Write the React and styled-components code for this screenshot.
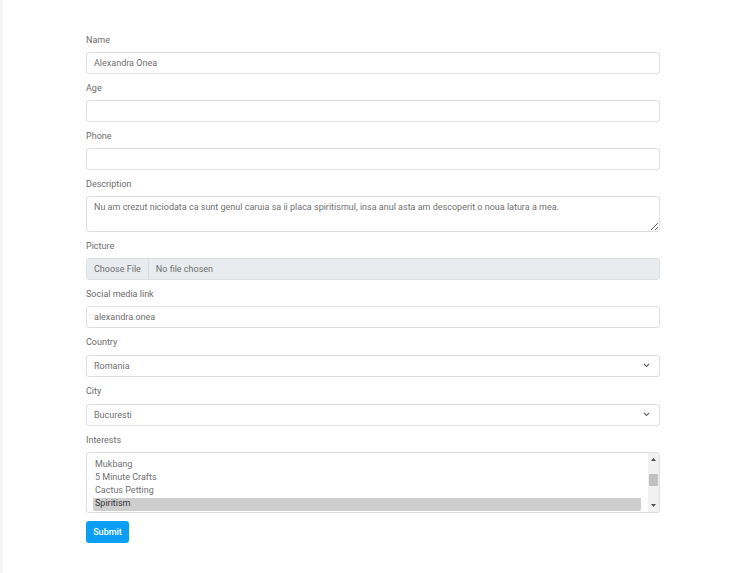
import React from "react";
import styled, { createGlobalStyle } from "styled-components";

const GlobalStyle = createGlobalStyle`
  html, body {
    margin: 0;
    padding: 0;
    background: #fff;
  }
  body {
    font-family: Roboto, "Liberation Sans", Arial, sans-serif;
  }
  * {
    box-sizing: border-box;
  }
`;

const Page = styled.div`
  display: flex;
  min-height: 573px;
`;

const SideStrip = styled.div`
  width: 3px;
  background: #f2f4f8;
  flex-shrink: 0;
`;

const Form = styled.form`
  width: 574px;
  margin-left: 83px;
  padding-top: 33.5px;
  display: flex;
  flex-direction: column;
`;

const Group = styled.div`
  display: flex;
  flex-direction: column;
  margin-bottom: 8px;
`;

const Label = styled.label`
  font-size: 9px;
  line-height: 13px;
  color: #6c6c6c;
  margin-bottom: 5px;
`;

const fieldBase = `
  width: 100%;
  font-family: Roboto, "Liberation Sans", Arial, sans-serif;
  font-size: 9px;
  color: #6f6f6f;
  border: 1px solid #dcdfe3;
  border-radius: 3px;
  background: #fff;
  outline: none;
`;

const Input = styled.input`
  ${fieldBase}
  height: 22px;
  padding: 0 7px;
`;

const TextArea = styled.textarea`
  ${fieldBase}
  height: 36px;
  padding: 4px 7px;
  line-height: 13px;
  resize: vertical;
  display: block;
`;

const FileInput = styled.input`
  ${fieldBase}
  height: 22px;
  padding: 0 7px;
  background: #e9ecef;
  line-height: 20px;

  &::file-selector-button {
    font-family: Roboto, "Liberation Sans", Arial, sans-serif;
    font-size: 9px;
    color: #6f6f6f;
    height: 20px;
    margin: 0 7px 0 -7px;
    padding: 0 7px;
    border: none;
    border-right: 1px solid #d6d9dd;
    background: #e9ecef;
  }
`;

const SelectWrap = styled.div`
  position: relative;
`;

const Select = styled.select`
  ${fieldBase}
  height: 22px;
  padding: 0 7px;
  appearance: none;
`;

const Chevron = styled.svg`
  position: absolute;
  right: 10px;
  top: 9px;
  pointer-events: none;
`;

const MultiBox = styled.div`
  position: relative;
  height: 61px;
  border: 1px solid #dcdfe3;
  border-radius: 3px;
  padding: 6.5px 18px 0 6px;
  overflow: hidden;
`;

const MultiSelect = styled.select`
  display: block;
  width: 100%;
  height: 52px;
  border: none;
  outline: none;
  padding: 0;
  overflow: hidden;
  font-family: Roboto, "Liberation Sans", Arial, sans-serif;
  font-size: 9px;

  option {
    height: 13px;
    line-height: 13px;
    padding: 0 2px;
    color: #6f6f6f;
  }
  option:checked {
    background: #cecece;
    color: #333;
  }
`;

const ScrollBar = styled.div`
  position: absolute;
  top: 0;
  right: 0;
  bottom: 0;
  width: 11px;
  background: #f1f1f1;
`;

const ScrollArrow = styled.svg`
  position: absolute;
  left: 3px;
  ${(p) => (p.$down ? "bottom: 5px;" : "top: 5px;")}
`;

const ScrollThumb = styled.div`
  position: absolute;
  left: 1px;
  top: 21px;
  width: 9px;
  height: 12px;
  background: #c1c1c1;
`;

const SubmitButton = styled.button`
  align-self: flex-start;
  height: 22px;
  width: 43px;
  padding: 0;
  font-family: Roboto, "Liberation Sans", Arial, sans-serif;
  font-size: 9px;
  font-weight: 500;
  color: #fff;
  background: #0a9ff5;
  border: none;
  border-radius: 3px;
`;

const interests = [
  "Mukbang",
  "5 Minute Crafts",
  "Cactus Petting",
  "Spiritism",
  "ASMR",
  "Knitting",
  "Yoga",
  "Painting",
  "Astrology",
  "Gaming",
  "Cooking",
  "Reading",
];

const ChevronIcon = () => (
  <Chevron width="7" height="5" viewBox="0 0 7 5">
    <path d="M1 1 L3.5 3.5 L6 1" fill="none" stroke="#666" strokeWidth="1.1" />
  </Chevron>
);

const App = () => {
  return (
    <>
      <GlobalStyle />
      <Page>
        <SideStrip />
        <Form onSubmit={(e) => e.preventDefault()}>
          <Group>
            <Label>Name</Label>
            <Input defaultValue="Alexandra Onea" />
          </Group>
          <Group>
            <Label>Age</Label>
            <Input />
          </Group>
          <Group>
            <Label>Phone</Label>
            <Input />
          </Group>
          <Group>
            <Label>Description</Label>
            <TextArea defaultValue="Nu am crezut niciodata ca sunt genul caruia sa ii placa spiritismul, insa anul asta am descoperit o noua latura a mea." />
          </Group>
          <Group>
            <Label>Picture</Label>
            <FileInput type="file" />
          </Group>
          <Group>
            <Label>Social media link</Label>
            <Input defaultValue="alexandra.onea" />
          </Group>
          <Group>
            <Label>Country</Label>
            <SelectWrap>
              <Select defaultValue="Romania">
                <option>Romania</option>
                <option>Moldova</option>
              </Select>
              <ChevronIcon />
            </SelectWrap>
          </Group>
          <Group>
            <Label>City</Label>
            <SelectWrap>
              <Select defaultValue="Bucuresti">
                <option>Bucuresti</option>
                <option>Cluj</option>
              </Select>
              <ChevronIcon />
            </SelectWrap>
          </Group>
          <Group>
            <Label>Interests</Label>
            <MultiBox>
              <MultiSelect multiple defaultValue={["Spiritism"]}>
                {interests.map((item) => (
                  <option key={item}>{item}</option>
                ))}
              </MultiSelect>
              <ScrollBar>
                <ScrollArrow width="5" height="3" viewBox="0 0 5 3">
                  <path d="M0 3 L2.5 0 L5 3 Z" fill="#505050" />
                </ScrollArrow>
                <ScrollThumb />
                <ScrollArrow $down width="5" height="3" viewBox="0 0 5 3">
                  <path d="M0 0 L5 0 L2.5 3 Z" fill="#505050" />
                </ScrollArrow>
              </ScrollBar>
            </MultiBox>
          </Group>
          <SubmitButton type="submit">Submit</SubmitButton>
        </Form>
      </Page>
    </>
  );
};

export default App;
